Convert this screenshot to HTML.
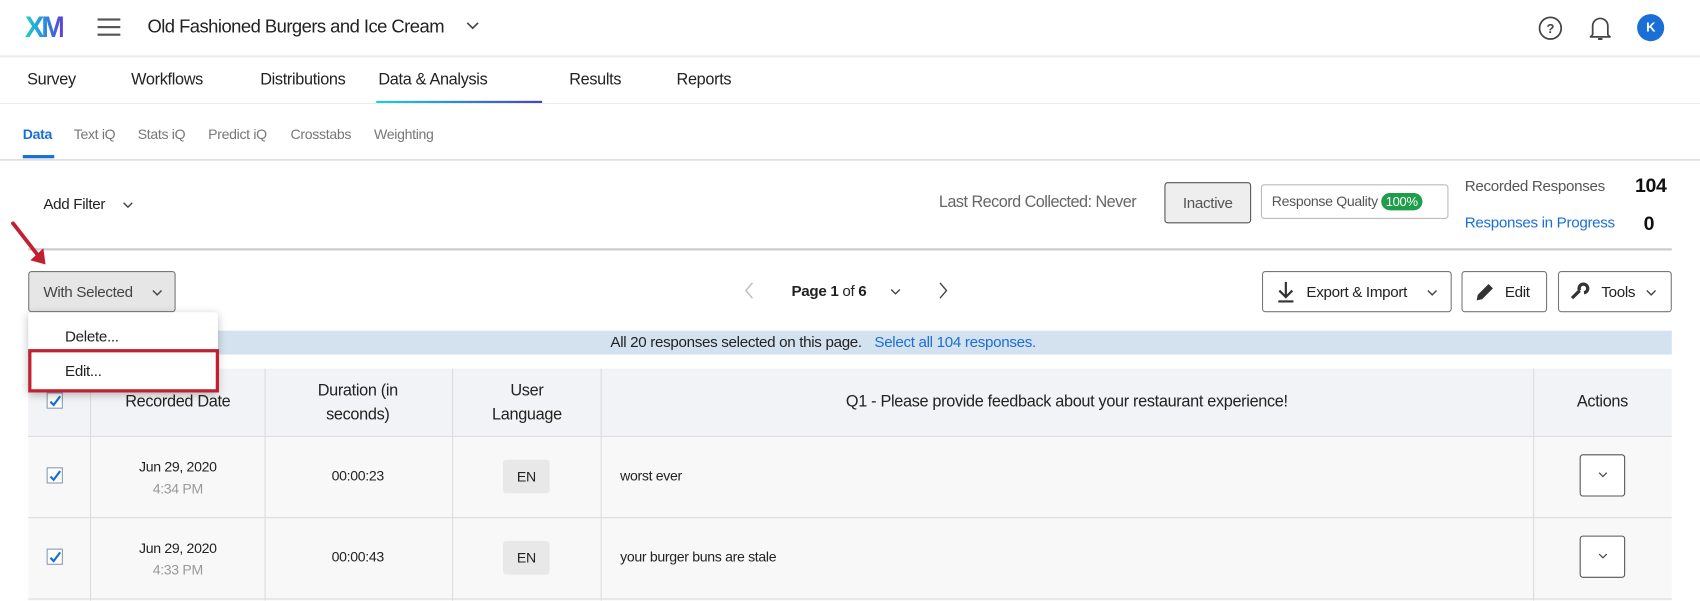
<!DOCTYPE html>
<html><head><meta charset="utf-8"><style>
html,body{margin:0;padding:0;width:1700px;height:600px;overflow:hidden;background:#fff}
#w{position:absolute;left:0;top:0;width:1568px;height:554px;transform:scale(1.08418);transform-origin:0 0;font-family:"Liberation Sans",sans-serif;color:#222;letter-spacing:-0.3px}
.a{position:absolute;white-space:nowrap}
.hl{position:absolute;background:#e6e6e6;height:1px}
.btn{position:absolute;border:1px solid #777;border-radius:3px;background:#fff;box-sizing:border-box}
.vl{position:absolute;width:1px;background:#dcdcdc;top:340px;height:214px}
.cb{position:absolute;width:15px;height:15px;border:1px solid #8a9bb0;background:#fff;box-sizing:border-box}
.c{text-align:center;transform:translateX(-50%)}
.en{position:absolute;width:43px;height:31px;background:#e8e8e8;border-radius:3px;font-size:13px;text-align:center;line-height:31px}
.ab{position:absolute;width:42px;height:39px;border:1px solid #555;border-radius:3px;background:#fff;box-sizing:border-box}
</style></head><body><div id="w">
<!-- header -->
<div class="a" style="left:23px;top:10px;font-size:27px;font-weight:bold;letter-spacing:-3px;background:linear-gradient(90deg,#1fd1c4,#2b8fe0,#5b3fd9);-webkit-background-clip:text;color:transparent">XM</div>
<div class="a" style="left:90px;top:17px;width:21px;height:2px;background:#555;box-shadow:0 7px 0 #555,0 14px 0 #555"></div>
<div class="a" style="left:136px;top:15px;font-size:17px;color:#222;letter-spacing:-0.5px">Old Fashioned Burgers and Ice Cream</div>
<svg class="a" style="left:430px;top:18px" width="12" height="10"><path d="M1 3l5 5 5-5" stroke="#444" stroke-width="1.5" fill="none"/></svg>
<svg class="a" style="left:1418px;top:14px" width="24" height="24"><circle cx="12" cy="12" r="10" stroke="#444" stroke-width="1.6" fill="none"/><text x="12" y="16.5" font-size="12" font-weight="bold" text-anchor="middle" fill="#444" font-family="Liberation Sans">?</text></svg>
<svg class="a" style="left:1465px;top:13px" width="22" height="26"><path d="M4 19V11a7 7 0 0 1 14 0v8l2 2H2z" stroke="#444" stroke-width="1.6" fill="none" stroke-linejoin="round"/><path d="M9 23h4" stroke="#444" stroke-width="1.8"/></svg>
<div class="a" style="left:1510px;top:13px;width:25px;height:25px;border-radius:50%;background:#1a6fd6;color:#fff;font-size:12px;font-weight:bold;text-align:center;line-height:25px">K</div>
<div class="hl" style="left:0;top:51px;width:1568px;background:#ececec;height:2px"></div>
<!-- tabs -->
<div class="a" style="left:25px;top:65px;font-size:15px">Survey</div>
<div class="a" style="left:121px;top:65px;font-size:15px">Workflows</div>
<div class="a" style="left:240px;top:65px;font-size:15px">Distributions</div>
<div class="a" style="left:349px;top:65px;font-size:15px">Data &amp; Analysis</div>
<div class="a" style="left:525px;top:65px;font-size:15px">Results</div>
<div class="a" style="left:624px;top:65px;font-size:15px">Reports</div>
<div class="a" style="left:347px;top:93px;width:153px;height:2px;background:linear-gradient(90deg,#22d0d6,#2b86e0,#4a3fcf)"></div>
<div class="hl" style="left:0;top:95px;width:1568px;background:#ececec"></div>
<div class="a" style="left:21px;top:116px;font-size:13px;color:#1a6fd6;font-weight:bold">Data</div>
<div class="a" style="left:68px;top:116px;font-size:13px;color:#777">Text iQ</div>
<div class="a" style="left:127px;top:116px;font-size:13px;color:#777">Stats iQ</div>
<div class="a" style="left:192px;top:116px;font-size:13px;color:#777">Predict iQ</div>
<div class="a" style="left:268px;top:116px;font-size:13px;color:#777">Crosstabs</div>
<div class="a" style="left:345px;top:116px;font-size:13px;color:#777">Weighting</div>
<div class="a" style="left:21px;top:143px;width:29px;height:3px;background:#1a6fd6"></div>
<div class="hl" style="left:0;top:147px;width:1568px;background:#ccc"></div>
<!-- filter row -->
<div class="a" style="left:40px;top:180px;font-size:14px">Add Filter</div>
<svg class="a" style="left:113px;top:185px" width="10" height="8"><path d="M1 2l4 4 4-4" stroke="#444" stroke-width="1.3" fill="none"/></svg>
<div class="a" style="left:866px;top:178px;font-size:15px;color:#666;letter-spacing:-0.5px">Last Record Collected: Never</div>
<div class="btn" style="left:1074px;top:168px;width:80px;height:38px;background:#eee;border-color:#555;font-size:14px;color:#555;text-align:center;line-height:36px">Inactive</div>
<div class="btn" style="left:1163px;top:170px;width:173px;height:32px;border-color:#bbb;font-size:13px;color:#555;line-height:30px;padding-left:9px">Response Quality <span style="background:#1e9e4a;color:#fff;border-radius:9px;padding:1px 4px;font-size:12px">100%</span></div>
<div class="a" style="left:1351px;top:163px;font-size:14px;color:#555">Recorded Responses</div>
<div class="a" style="left:1508px;top:161px;font-size:18px;font-weight:bold;color:#111">104</div>
<div class="a" style="left:1351px;top:197px;font-size:14px;color:#1a6fd6">Responses in Progress</div>
<div class="a" style="left:1516px;top:196px;font-size:18px;font-weight:bold;color:#111">0</div>
<div class="hl" style="left:26px;top:229px;width:1516px;background:#ccc;height:2px"></div>
<!-- arrow -->
<svg class="a" style="left:4px;top:200px" width="44" height="48"><path d="M8 6L33 38" stroke="#c0202f" stroke-width="3.5" stroke-linecap="round"/><path d="M24 40L38 44L36 29Z" fill="#c0202f"/></svg>
<!-- action row -->
<div class="btn" style="left:26px;top:250px;width:136px;height:38px;background:#e6e6e6;border-color:#777;font-size:14px;color:#444;line-height:36px;padding-left:13px">With Selected</div>
<svg class="a" style="left:140px;top:266px" width="10" height="8"><path d="M1 2l4 4 4-4" stroke="#444" stroke-width="1.3" fill="none"/></svg>
<svg class="a" style="left:686px;top:260px" width="10" height="16"><path d="M8 1L2 8l6 7" stroke="#bbb" stroke-width="1.3" fill="none"/></svg>
<div class="a" style="left:730px;top:260px;font-size:14px"><b>Page 1</b> of <b>6</b></div>
<svg class="a" style="left:821px;top:265px" width="10" height="8"><path d="M1 2l4 4 4-4" stroke="#444" stroke-width="1.3" fill="none"/></svg>
<svg class="a" style="left:865px;top:260px" width="10" height="16"><path d="M2 1l6 7-6 7" stroke="#444" stroke-width="1.3" fill="none"/></svg>
<div class="btn" style="left:1164px;top:250px;width:175px;height:38px;font-size:14px;line-height:36px;padding-left:40px">Export &amp; Import</div>
<svg class="a" style="left:1177px;top:259px" width="18" height="20"><path d="M9 1v13M3 9l6 6 6-6M2 19h14" stroke="#333" stroke-width="2" fill="none"/></svg>
<svg class="a" style="left:1316px;top:266px" width="10" height="8"><path d="M1 2l4 4 4-4" stroke="#444" stroke-width="1.3" fill="none"/></svg>
<div class="btn" style="left:1348px;top:250px;width:79px;height:38px;font-size:14px;line-height:36px;padding-left:39px">Edit</div>
<svg class="a" style="left:1360px;top:259px" width="20" height="20"><path d="M2 18l1-5L13 3l4 4L7 17z" fill="#333"/></svg>
<div class="btn" style="left:1437px;top:250px;width:105px;height:38px;font-size:14px;line-height:36px;padding-left:39px">Tools</div>
<svg class="a" style="left:1447px;top:259px" width="20" height="20"><path d="M3 16l7-7M10 9a4 4 0 1 1 4 2" stroke="#333" stroke-width="3" fill="none"/></svg>
<svg class="a" style="left:1518px;top:266px" width="10" height="8"><path d="M1 2l4 4 4-4" stroke="#444" stroke-width="1.3" fill="none"/></svg>
<!-- selection bar -->
<div class="a" style="left:26px;top:305px;width:1516px;height:22px;background:#d3e2ee"></div>
<div class="a" style="left:563px;top:307px;font-size:14px;color:#222">All 20 responses selected on this page. <span style="color:#1a6fd6;margin-left:8px">Select all 104 responses.</span></div>
<!-- table -->
<div class="a" style="left:26px;top:340px;width:1516px;height:62px;background:#f2f3f6"></div>
<div class="a" style="left:26px;top:402px;width:1516px;height:152px;background:#f8f8f8"></div>
<div class="hl" style="left:26px;top:402px;width:1516px;background:#dcdcdc"></div>
<div class="hl" style="left:26px;top:477px;width:1516px;background:#dcdcdc"></div>
<div class="hl" style="left:26px;top:552px;width:1516px;background:#dcdcdc"></div>
<div class="vl" style="left:83px"></div><div class="vl" style="left:244px"></div><div class="vl" style="left:417px"></div><div class="vl" style="left:554px"></div><div class="vl" style="left:1414px"></div>
<div class="a c" style="left:164px;top:362px;font-size:15px">Recorded Date</div>
<div class="a c" style="left:330px;top:350px;font-size:15px;line-height:22px">Duration (in<br>seconds)</div>
<div class="a c" style="left:486px;top:350px;font-size:15px;line-height:22px">User<br>Language</div>
<div class="a c" style="left:984px;top:362px;font-size:15px">Q1 - Please provide feedback about your restaurant experience!</div>
<div class="a c" style="left:1478px;top:362px;font-size:15px">Actions</div>
<div class="a c" style="left:164px;top:421px;font-size:13px;line-height:20px">Jun 29, 2020<br><span style="color:#999">4:34 PM</span></div>
<div class="a c" style="left:330px;top:431px;font-size:13px">00:00:23</div>
<div class="en" style="left:464px;top:424px">EN</div>
<div class="a" style="left:572px;top:431px;font-size:13px">worst ever</div>
<div class="ab" style="left:1457px;top:419px"></div>
<div class="a c" style="left:164px;top:496px;font-size:13px;line-height:20px">Jun 29, 2020<br><span style="color:#999">4:33 PM</span></div>
<div class="a c" style="left:330px;top:506px;font-size:13px">00:00:43</div>
<div class="en" style="left:464px;top:499px">EN</div>
<div class="a" style="left:572px;top:506px;font-size:13px">your burger buns are stale</div>
<div class="ab" style="left:1457px;top:494px"></div>
<svg class="a" style="left:1474px;top:435px" width="9" height="6"><path d="M1 1l3.5 3.5L8 1" stroke="#444" stroke-width="1.1" fill="none"/></svg>
<svg class="a" style="left:1474px;top:510px" width="9" height="6"><path d="M1 1l3.5 3.5L8 1" stroke="#444" stroke-width="1.1" fill="none"/></svg>
<div class="cb" style="left:43px;top:362px"></div>
<div class="cb" style="left:43px;top:431px"></div>
<div class="cb" style="left:43px;top:506px"></div>
<svg class="a" style="left:45px;top:364px" width="12" height="12"><path d="M1.5 6.5l3 3 6-8" stroke="#1a6fd6" stroke-width="2" fill="none"/></svg>
<svg class="a" style="left:45px;top:433px" width="12" height="12"><path d="M1.5 6.5l3 3 6-8" stroke="#1a6fd6" stroke-width="2" fill="none"/></svg>
<svg class="a" style="left:45px;top:508px" width="12" height="12"><path d="M1.5 6.5l3 3 6-8" stroke="#1a6fd6" stroke-width="2" fill="none"/></svg>
<!-- dropdown -->
<div class="a" style="left:26px;top:288px;width:175px;height:74px;background:#fff;border-radius:3px;box-shadow:0 2px 8px rgba(0,0,0,.25)"></div>
<div class="a" style="left:60px;top:302px;font-size:14px">Delete...</div>
<div class="a" style="left:26px;top:322px;width:176px;height:40px;border:3px solid #c0202f;box-sizing:border-box"></div>
<div class="a" style="left:60px;top:334px;font-size:14px">Edit...</div>
</div></body></html>
